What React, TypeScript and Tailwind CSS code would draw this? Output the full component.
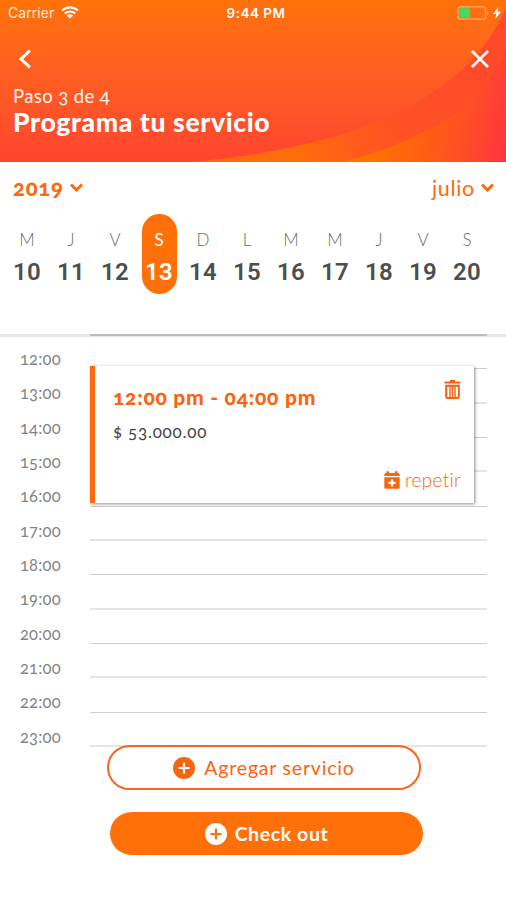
import React from 'react';
import clsx from 'clsx';

interface Day {
  letter: string;
  date: number;
}

const days: Day[] = [
  { letter: 'M', date: 10 },
  { letter: 'J', date: 11 },
  { letter: 'V', date: 12 },
  { letter: 'S', date: 13 },
  { letter: 'D', date: 14 },
  { letter: 'L', date: 15 },
  { letter: 'M', date: 16 },
  { letter: 'M', date: 17 },
  { letter: 'J', date: 18 },
  { letter: 'V', date: 19 },
  { letter: 'S', date: 20 },
];

const hours = [
  '12:00', '13:00', '14:00', '15:00', '16:00', '17:00',
  '18:00', '19:00', '20:00', '21:00', '22:00', '23:00',
];

const Chevron: React.FC = () => (
  <svg className="mb-[2px] h-[9px] w-[13px]" viewBox="0 0 13 9" fill="none" stroke="currentColor" strokeWidth="3">
    <path d="M1 1.5L6.5 7L12 1.5" />
  </svg>
);

const PlusCircle: React.FC<{ plus: string }> = ({ plus }) => (
  <svg className="h-[22px] w-[22px]" viewBox="0 0 22 22">
    <circle cx="11" cy="11" r="11" fill="currentColor" />
    <path d="M11 5.5V16.5M5.5 11H16.5" className={plus} strokeWidth="2.2" />
  </svg>
);

const StatusBar: React.FC = () => (
  <div className="grid h-[26px] grid-cols-3 items-center pl-2 pr-[5px] font-[Inter,sans-serif] text-white">
    <div className="flex items-center gap-[7px]">
      <span className="pt-[2px] text-[13.8px] leading-none tracking-[0.15px] text-orange-100">Carrier</span>
      <svg className="h-[13px] w-[18px]" viewBox="0 0 18 13" fill="none" stroke="currentColor" strokeWidth="2.1">
        <path d="M1 4.6C5.5 .3 12.5 .3 17 4.6" />
        <path d="M3.9 7.5C6.8 4.9 11.2 4.9 14.1 7.5" />
        <path d="M9 12.6L5.8 9.5C7.6 7.9 10.4 7.9 12.2 9.5Z" fill="currentColor" stroke="none" />
      </svg>
    </div>
    <span className="pl-[3px] pt-[1px] text-center text-[13.5px] font-semibold leading-none tracking-[0.5px]">9:44 PM</span>
    <div className="flex items-center justify-end gap-1">
      <svg className="h-[14px] w-[32px]" viewBox="0 0 32 14" fill="none">
        <rect x="1" y="0.8" width="27.5" height="12.4" rx="2.5" stroke="#ffac6e" strokeWidth="1.3" />
        <path d="M30 4.5C32 5.5 32 8.5 30 9.5Z" fill="#ffac6e" />
        <rect x="2.5" y="2.3" width="10.5" height="9.4" rx="1" fill="#3ddc62" />
      </svg>
      <svg className="h-[12px] w-[8px]" viewBox="0 0 8 12" fill="currentColor">
        <path d="M5.4 0L0 7H3.2L2.4 12L8 4.8H4.8Z" />
      </svg>
    </div>
  </div>
);

const Header: React.FC = () => (
  <header className="relative h-[162px] bg-linear-to-b from-[#ff7208] to-[#ff432f]">
    <svg className="absolute inset-0 h-[162px] w-[506px]" viewBox="0 0 506 162">
      <defs>
        <linearGradient id="band" x1="200" y1="162" x2="490" y2="50" gradientUnits="userSpaceOnUse">
          <stop offset="0" stopColor="#ff6a0c" />
          <stop offset="0.3" stopColor="#ff6e0a" />
          <stop offset="0.5" stopColor="#ff5a1c" />
          <stop offset="0.66" stopColor="#ff5025" />
          <stop offset="1" stopColor="#ff4a2a" />
        </linearGradient>
        <linearGradient id="corner" x1="370" y1="130" x2="506" y2="160" gradientUnits="userSpaceOnUse">
          <stop offset="0" stopColor="#ff7400" />
          <stop offset="0.35" stopColor="#ff6210" />
          <stop offset="0.7" stopColor="#ff4c28" />
          <stop offset="1" stopColor="#ff3340" />
        </linearGradient>
      </defs>
      <path d="M190 162C330 150 462 110 506 8V162Z" fill="url(#band)" />
      <path d="M342 162C420 142 488 105 506 50V162Z" fill="url(#corner)" />
    </svg>
    <div className="relative">
      <StatusBar />
      <div className="flex h-[60px] items-center justify-between pl-[18px] pr-[17px] pt-[6px] text-white">
        <svg className="h-[20px] w-[14px]" viewBox="0 0 14 20" fill="none" stroke="currentColor" strokeWidth="3">
          <path d="M12 1.5L3 10L12 18.5" />
        </svg>
        <svg className="h-[18px] w-[18px]" viewBox="0 0 18 18" fill="none" stroke="currentColor" strokeWidth="2.6">
          <path d="M1 1L17 17M17 1L1 17" />
        </svg>
      </div>
      <div className="-mt-[1px] pl-[13px] text-white">
        <p className="whitespace-nowrap text-[18.5px] leading-[22px] tracking-[0.4px] text-orange-50">Paso 3 de 4</p>
        <h1 className="whitespace-nowrap text-[26.5px] font-black leading-[30px] tracking-[0.65px]">Programa tu servicio</h1>
      </div>
    </div>
  </header>
);

const DayPicker: React.FC = () => (
  <section className="h-[172px]">
    <div className="flex h-[52px] items-center justify-between pl-[13px] pr-[12px] text-[#fe6a0a]">
      <button className="flex items-center gap-[6px]">
        <span className="text-[22px] font-black leading-none tracking-[0.8px]">2019</span>
        <Chevron />
      </button>
      <button className="flex items-center gap-[6px]">
        <span className="pt-[1px] text-[21.5px] leading-none tracking-[0.7px]">julio</span>
        <Chevron />
      </button>
    </div>
    <div className="flex pl-[5px]">
      {days.map((day) => {
        const selected = day.date === 13;
        return (
          <div key={day.date} className="flex w-11 justify-center">
            <div
              className={clsx(
                'flex h-[80px] w-[35px] flex-col items-center rounded-full pt-[15px]',
                selected ? 'bg-[#ff7008] text-white' : 'text-[#4e4e4e]'
              )}
            >
              <span
                className={clsx(
                  'text-[17px] leading-[22px]',
                  selected ? 'text-white' : 'font-light text-[#6c6c6c]'
                )}
              >
                {day.letter}
              </span>
              <span className="pt-[9px] font-[Roboto,sans-serif] text-[24px] font-semibold leading-[24px] tracking-[0.4px] [font-feature-settings:normal]">
                {day.date}
              </span>
            </div>
          </div>
        );
      })}
    </div>
  </section>
);

const BookingCard: React.FC = () => (
  <article className="absolute left-[90px] top-[32px] flex h-[137px] w-[384px] flex-col justify-between border-l-[5px] border-[#ff690f] bg-white pb-[12px] pl-[18px] pr-[13px] pt-[14px] shadow-[1px_1px_3px_rgba(0,0,0,0.45)]">
    <div className="flex items-start justify-between">
      <div>
        <h2 className="whitespace-nowrap text-[21px] font-black leading-[33px] tracking-[0.75px] text-[#fb640d]">12:00 pm - 04:00 pm</h2>
        <p className="whitespace-nowrap pt-[6px] text-[17px] leading-[26px] tracking-[0.75px] text-[#444]">$ 53.000.00</p>
      </div>
      <svg className="h-[19px] w-[17px] text-[#f5620f]" viewBox="0 0 17 19" fill="none" stroke="currentColor">
        <path d="M0.5 2.5H16.5M6 1H11" strokeWidth="2" />
        <path d="M2.2 5.8H14.8V16.5Q14.8 18 13.3 18H3.7Q2.2 18 2.2 16.5Z" strokeWidth="2" />
        <path d="M6 6V17.5M8.5 6V17.5M11 6V17.5" strokeWidth="1.4" />
      </svg>
    </div>
    <button className="flex items-center gap-[5px] self-end text-[#fb640d]">
      <svg className="h-[18px] w-[16px]" viewBox="0 0 16 18">
        <path d="M0.3 5V3.5Q0.3 2 1.8 2H2.4V0.3H5V2H11V0.3H13.6V2H14.2Q15.7 2 15.7 3.5V5Z" fill="currentColor" />
        <path d="M0.3 6.2H15.7V16.2Q15.7 17.7 14.2 17.7H1.8Q0.3 17.7 0.3 16.2Z" fill="currentColor" />
        <path d="M8 8.2V15.6M4.3 11.9H11.7" stroke="white" strokeWidth="2.3" />
      </svg>
      <span className="text-[19px] font-light leading-[22px] tracking-[0.3px]">repetir</span>
    </button>
  </article>
);

const Schedule: React.FC = () => (
  <section className="relative h-[412px]">
    <div className="h-[3px] bg-[#e6e6e6]">
      <div className="ml-[90px] mr-[19px] h-[2px] bg-[#bdbdbd]" />
    </div>
    <ul className="-mt-[2px]">
      {hours.map((hour, i) => (
        <li key={hour} className="flex h-[34.33px] pl-[20px] pr-[19px]">
          <span className="w-[70px] pt-[14px] text-[16.5px] leading-[20px] tracking-[0.2px] text-[#848484]">{hour}</span>
          <div
            className={clsx(
              'flex-1',
              i % 2 === 0 ? 'border-b border-[#cecece]' : 'border-b-2 border-[#e5e5e5]'
            )}
          />
        </li>
      ))}
    </ul>
    <BookingCard />
  </section>
);

const App: React.FC = () => {
  return (
    <main className="h-[900px] w-[506px] overflow-hidden bg-white font-[Lato,sans-serif] [font-feature-settings:'onum']">
      <Header />
      <DayPicker />
      <Schedule />
      <div className="relative -mt-[1px] flex flex-col gap-[22px] pl-[107px]">
        <button className="flex h-[45px] w-[314px] items-center justify-center gap-[9px] rounded-full border-2 border-[#fa651b] bg-white text-[#fa640e]">
          <PlusCircle plus="stroke-white" />
          <span className="pt-[1px] text-[19.5px] leading-none tracking-[0.8px]">Agregar servicio</span>
        </button>
        <button className="ml-[3px] flex h-[43px] w-[313px] items-center justify-center gap-[8px] rounded-full bg-[#ff7008] text-white">
          <PlusCircle plus="stroke-[#ff7008]" />
          <span className="text-[19.5px] font-bold leading-none tracking-[0.6px]">Check out</span>
        </button>
      </div>
    </main>
  );
};

export default App;
